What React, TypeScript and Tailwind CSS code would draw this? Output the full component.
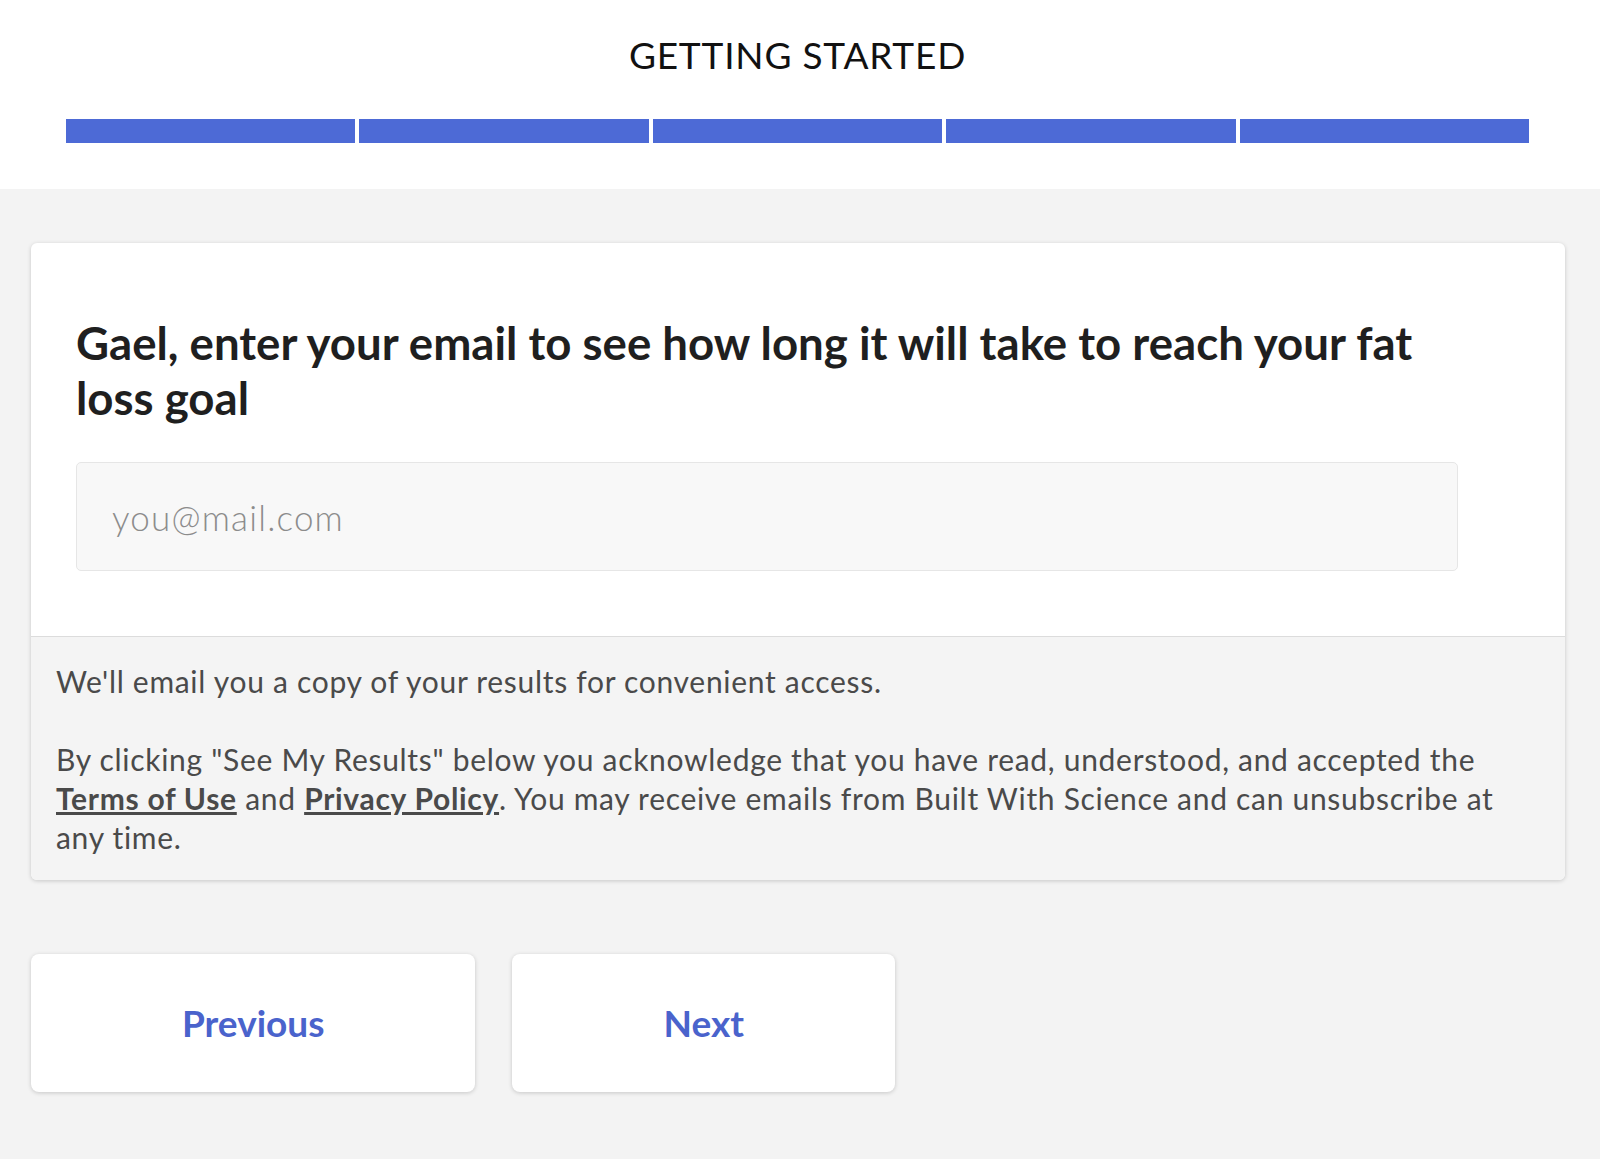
import React from "react";

const steps = [0, 1, 2, 3, 4];

const App = () => {
  return (
    <div className="min-h-[1159px] bg-[#f3f3f3] font-['Lato','Noto_Sans',sans-serif]">
      <div className="bg-white pl-[66px] pr-[71px] pt-[33px] pb-[46px]">
        <h1 className="text-center text-[37px] leading-[44px] tracking-[0.8px] text-[#111]">
          GETTING STARTED
        </h1>
        <div className="mt-[42px] flex gap-[4px]">
          {steps.map((s) => (
            <div key={s} className="h-[24px] flex-1 bg-[#4d6ad6]" />
          ))}
        </div>
      </div>

      <div className="pl-[31px] pr-[35px] pt-[54px]">
        <div className="rounded-md bg-white shadow-[0_1px_4px_rgba(0,0,0,0.18)]">
          <div className="px-[45px] pt-[72px] pb-[65px]">
            <h2 className="max-w-[1382px] text-[45.6px] font-bold leading-[55px] text-[#1f1f1f]">
              Gael, enter your email to see how long it will take to reach your fat loss goal
            </h2>
            <input
              type="email"
              placeholder="you@mail.com"
              className="mt-[37px] block h-[109px] w-[1382px] rounded-[5px] border border-[#e6e6e6] bg-[#f8f8f8] pl-[35px] text-[35px] font-light tracking-[1.2px] text-[#333] outline-none placeholder:text-[#8c8c8c]"
            />
          </div>
          <div className="rounded-b-md border-t border-[#dcdcdc] bg-[#f4f4f4] px-[25px] pt-[25px] pb-[23px] text-[30px] leading-[39px] tracking-[0.7px] text-[#4a4a4a]">
            <p>We'll email you a copy of your results for convenient access.</p>
            <p className="mt-[39px]">
              By clicking "See My Results" below you acknowledge that you have read, understood, and accepted the{" "}
              <a href="#" className="font-bold underline underline-offset-2">
                Terms of Use
              </a>{" "}
              and{" "}
              <a href="#" className="font-bold underline underline-offset-2">
                Privacy Policy
              </a>
              . You may receive emails from Built With Science and can unsubscribe at any time.
            </p>
          </div>
        </div>

        <div className="mt-[74px] flex gap-[37px]">
          <button className="h-[138px] rounded-lg bg-white px-[151px] text-[37px] font-bold text-[#4a63cc] shadow-[0_1px_4px_rgba(0,0,0,0.18)]">
            Previous
          </button>
          <button className="h-[138px] rounded-lg bg-white px-[151px] text-[37px] font-bold text-[#4a63cc] shadow-[0_1px_4px_rgba(0,0,0,0.18)]">
            Next
          </button>
        </div>
      </div>
    </div>
  );
};

export default App;
